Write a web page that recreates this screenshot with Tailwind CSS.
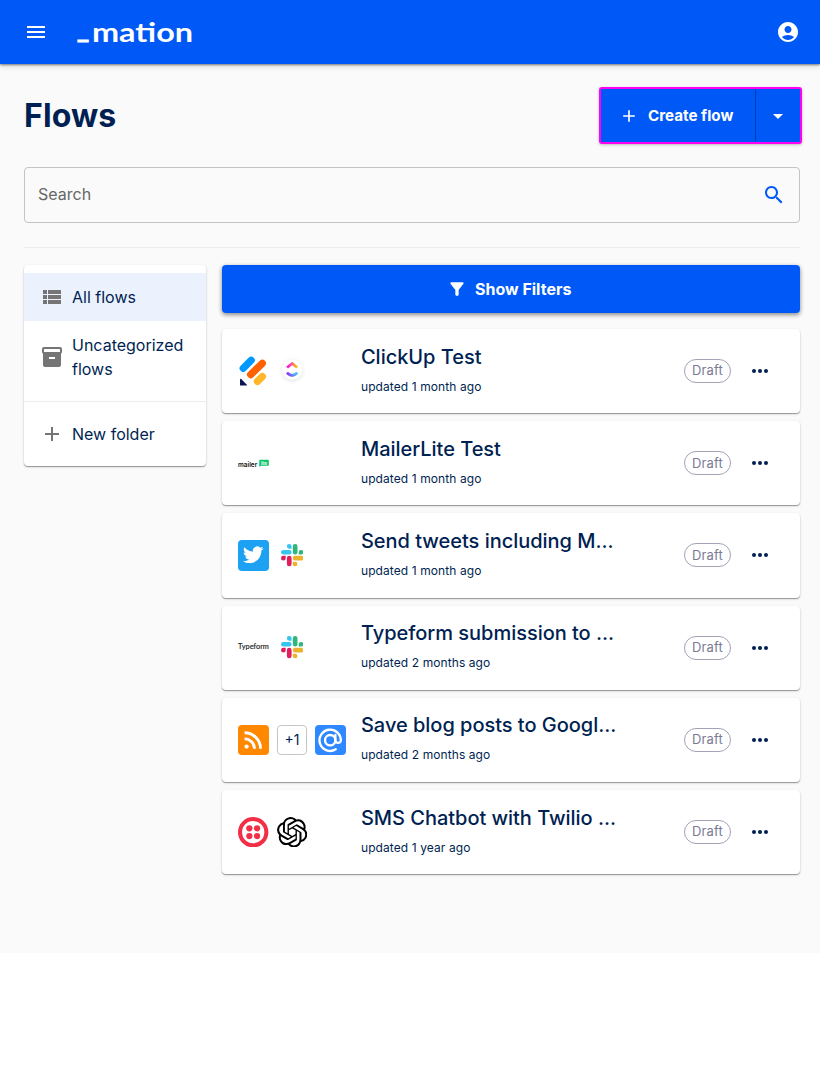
<!DOCTYPE html>
<html lang="en">
<head>
  <meta charset="UTF-8" />
  <title>Flows</title>
  <script src="https://cdn.jsdelivr.net/npm/@tailwindcss/browser@4"></script>
</head>
<body class="bg-white font-['Inter',sans-serif] text-[#001f52]">
  <!-- Shared icons -->
  <svg class="hidden">
    <symbol id="add" viewBox="0 0 24 24"><path d="M19 13h-6v6h-2v-6H5v-2h6V5h2v6h6v2z" /></symbol>
    <symbol id="more" viewBox="0 0 24 24"><circle cx="6" cy="12" r="2" /><circle cx="12" cy="12" r="2" /><circle cx="18" cy="12" r="2" /></symbol>
    <symbol id="slack" viewBox="0 0 24 24">
      <path d="M5.042 15.165a2.528 2.528 0 0 1-2.52 2.523A2.528 2.528 0 0 1 0 15.165a2.527 2.527 0 0 1 2.522-2.52h2.52v2.52zM6.313 15.165a2.527 2.527 0 0 1 2.521-2.52 2.527 2.527 0 0 1 2.521 2.52v6.313A2.528 2.528 0 0 1 8.834 24a2.528 2.528 0 0 1-2.521-2.522v-6.313z" fill="#e01e5a" />
      <g fill="#36c5f0" transform="rotate(90 12 12)"><path d="M5.042 15.165a2.528 2.528 0 0 1-2.52 2.523A2.528 2.528 0 0 1 0 15.165a2.527 2.527 0 0 1 2.522-2.52h2.52v2.52zM6.313 15.165a2.527 2.527 0 0 1 2.521-2.52 2.527 2.527 0 0 1 2.521 2.52v6.313A2.528 2.528 0 0 1 8.834 24a2.528 2.528 0 0 1-2.521-2.522v-6.313z" /></g>
      <g fill="#2eb67d" transform="rotate(180 12 12)"><path d="M5.042 15.165a2.528 2.528 0 0 1-2.52 2.523A2.528 2.528 0 0 1 0 15.165a2.527 2.527 0 0 1 2.522-2.52h2.52v2.52zM6.313 15.165a2.527 2.527 0 0 1 2.521-2.52 2.527 2.527 0 0 1 2.521 2.52v6.313A2.528 2.528 0 0 1 8.834 24a2.528 2.528 0 0 1-2.521-2.522v-6.313z" /></g>
      <g fill="#ecb22e" transform="rotate(270 12 12)"><path d="M5.042 15.165a2.528 2.528 0 0 1-2.52 2.523A2.528 2.528 0 0 1 0 15.165a2.527 2.527 0 0 1 2.522-2.52h2.52v2.52zM6.313 15.165a2.527 2.527 0 0 1 2.521-2.52 2.527 2.527 0 0 1 2.521 2.52v6.313A2.528 2.528 0 0 1 8.834 24a2.528 2.528 0 0 1-2.521-2.522v-6.313z" /></g>
    </symbol>
  </svg>

  <div class="h-[953px] bg-[#fafafa]">
    <header class="h-16 bg-[#0059f7] flex items-center px-6 shadow-[0_1px_2px_rgba(0,0,0,0.45),0_2px_6px_rgba(0,0,0,0.15)]">
      <svg class="size-6" viewBox="0 0 24 24" fill="white"><path d="M3 18h18v-2H3v2zm0-5h18v-2H3v2zm0-7v2h18V6H3z" /></svg>
      <svg class="ml-6 w-[124px] h-[52px] overflow-visible font-['Lato',sans-serif] font-bold" viewBox="72 6 124 52" fill="white">
        <text x="77" y="38.3" font-size="25" textLength="12" lengthAdjust="spacingAndGlyphs" stroke="white" stroke-width="1.2">_</text>
        <text x="92" y="41.5" font-size="26" textLength="101" lengthAdjust="spacingAndGlyphs">mation</text>
      </svg>
      <svg class="ml-auto -mr-1 size-6" viewBox="0 0 24 24" fill="white"><path d="M12 2C6.48 2 2 6.48 2 12s4.48 10 10 10 10-4.48 10-10S17.52 2 12 2zm0 4c1.93 0 3.5 1.57 3.5 3.5S13.93 13 12 13s-3.5-1.57-3.5-3.5S10.07 6 12 6zm0 14c-2.03 0-4.43-.82-6.14-2.88C7.55 15.8 9.68 15 12 15s4.45.8 6.14 2.12C16.43 19.18 14.03 20 12 20z" /></svg>
    </header>

    <main class="pl-6 pr-5 pt-[23px]">
      <div class="flex items-center justify-between h-[57px] -mr-0.5">
        <h1 class="text-[32px] font-bold tracking-[0.1px]">Flows</h1>
        <div class="flex w-[203px] h-[57px] rounded-[3px] border-2 border-[#ff00f5] bg-[#0059f7] text-white shadow-[0_1px_3px_rgba(0,0,0,0.25)]">
          <button class="w-[155px] flex items-center pl-[18px] border-r border-[#003da8] text-[15.2px] font-bold">
            <svg class="size-5 mr-[9px]" viewBox="0 0 24 24" fill="white"><use href="#add" /></svg>
            <span class="pt-px">Create flow</span>
          </button>
          <button class="flex-1 flex items-center justify-center">
            <svg class="size-6" viewBox="0 0 24 24" fill="white"><path d="m7 10 5 5 5-5z" /></svg>
          </button>
        </div>
      </div>

      <div class="mt-[23px] h-[56px] flex items-center justify-between border border-[#c4c4c4] rounded px-[13px] text-[#666]">
        <span class="pb-0.5">Search</span>
        <svg class="size-6" viewBox="0 0 24 24" fill="#0059f7"><path d="M15.5 14h-.79l-.28-.27C15.41 12.59 16 11.11 16 9.5 16 5.91 13.09 3 9.5 3S3 5.91 3 9.5 5.91 16 9.5 16c1.61 0 3.09-.59 4.23-1.57l.27.28v.79l5 4.99L20.49 19l-4.99-5zm-6 0C7.01 14 5 11.99 5 9.5S7.01 5 9.5 5 14 7.01 14 9.5 11.99 14 9.5 14z" /></svg>
      </div>

      <hr class="mt-6 border-[#ededed]" />

      <div class="mt-[17px] flex items-start gap-4">
        <!-- Folders -->
        <aside class="w-[182.4px] pt-2 h-[201px] bg-white rounded shadow-[0_1px_1px_rgba(0,0,0,0.35),0_1px_3px_rgba(0,0,0,0.12)]">
          <div class="h-12 flex items-center pl-4 pb-px bg-[#ecf1fe]">
            <svg class="size-6 mr-2" viewBox="0 0 24 24" fill="#757575"><path d="M3 14h4v-4H3v4zm0 5h4v-4H3v4zM3 9h4V5H3v4zm5 5h13v-4H8v4zm0 5h13v-4H8v4zM8 5v4h13V5H8z" /></svg>
            All flows
          </div>
          <div class="h-[72px] flex items-center pl-4">
            <svg class="size-6 mr-2 shrink-0" viewBox="0 0 24 24" fill="#757575"><path d="M20 2H4c-1 0-2 .9-2 2v3.01c0 .72.43 1.34 1 1.69V20c0 1.1 1.1 2 2 2h14c.9 0 2-.9 2-2V8.7c.57-.35 1-.97 1-1.69V4c0-1.1-1-2-2-2zm-5 12H9v-2h6v2zm5-7H4V4l16-.02V7z" /></svg>
            <span>Uncategorized flows</span>
          </div>
          <hr class="my-2 border-[#ececec]" />
          <div class="h-12 flex items-center pl-4">
            <svg class="size-6 mr-2" viewBox="0 0 24 24" fill="#757575"><use href="#add" /></svg>
            New folder
          </div>
        </aside>

        <section class="flex-1">
          <button class="w-full h-12 flex items-center justify-center gap-2 pr-1 pb-px rounded bg-[#0059f7] text-white text-[16px] font-bold shadow-[0_2px_4px_rgba(0,0,0,0.35),0_1px_5px_rgba(0,0,0,0.15)]">
            <svg class="size-5" viewBox="0 0 24 24" fill="white"><path d="M4.25 5.61C6.27 8.2 10 13 10 13v6c0 .55.45 1 1 1h2c.55 0 1-.45 1-1v-6s3.72-4.8 5.74-7.39c.51-.66.04-1.61-.79-1.61H5.04c-.83 0-1.3.95-.79 1.61z" /></svg>
            Show Filters
          </button>

          <!-- Flow rows -->
          <div class="mt-4 flex flex-col gap-2">
            <div class="h-[84.2px] flex items-center pl-4 pr-7 bg-white rounded shadow-[0_1px_1px_rgba(0,0,0,0.35),0_1px_3px_rgba(0,0,0,0.12)]">
              <div class="w-[122.6px] flex gap-2">
                <svg class="size-[30.4px]" viewBox="0 0 30 30" stroke-width="7.2" stroke-linecap="round">
                  <path d="M5.2 12.1 13 4.2" stroke="#0099ff" />
                  <path d="M12.5 18.3 24 7.2" stroke="#ff6100" />
                  <path d="M19.2 25.1 24 20.4" stroke="#ffb629" />
                  <path d="M2 23.1v6h6.5q.8-.2.2-.8L3.2 22.6q-.8-.6-1.2.5z" fill="#0a1551" />
                </svg>
                <svg class="size-[30.4px] overflow-visible" viewBox="0 0 30 30" fill="none">
                  <defs>
                    <linearGradient id="cu-top"><stop stop-color="#ff02f0" /><stop offset="1" stop-color="#ffc800" /></linearGradient>
                    <linearGradient id="cu-bottom"><stop stop-color="#8930fd" /><stop offset="1" stop-color="#49ccf9" /></linearGradient>
                  </defs>
                  <circle class="drop-shadow-[0_1px_2px_rgba(0,0,0,0.12)]" cx="15" cy="13.5" r="10" fill="white" />
                  <path d="M10 11.4 15 7.3l5 4.1" stroke="url(#cu-top)" stroke-width="2.7" />
                  <path d="M9.8 16.6q5.2 5.2 10.4 0" stroke="url(#cu-bottom)" stroke-width="2.7" />
                </svg>
              </div>
              <div class="w-[323px] pb-[5px]">
                <div class="text-[20px] leading-8 font-medium tracking-[-0.03px]">ClickUp Test</div>
                <div class="mt-1 text-xs leading-5 tracking-[0.09px]">updated 1 month ago</div>
              </div>
              <span class="w-[47px] h-6 flex items-center justify-center rounded-full border border-[#a3a3b8] text-[13px] tracking-[0.2px] text-[#7a7a94]">Draft</span>
              <svg class="ml-auto size-6" viewBox="0 0 24 24" fill="#001f52"><use href="#more" /></svg>
            </div>

            <div class="h-[84.2px] flex items-center pl-4 pr-7 bg-white rounded shadow-[0_1px_1px_rgba(0,0,0,0.35),0_1px_3px_rgba(0,0,0,0.12)]">
              <div class="w-[122.6px] flex gap-2">
                <svg class="size-[30.4px] overflow-visible font-semibold" viewBox="0 0 30 30">
                  <text x="0" y="18.5" font-size="6.4" textLength="19" lengthAdjust="spacingAndGlyphs" fill="#111">mailer</text>
                  <path d="M21.8 11.5h7.8a.8.8 0 0 1 .8.8v4.4a.8.8 0 0 1-.8.8h-7L21 18.8v-6.5a.8.8 0 0 1 .8-.8z" fill="#09c269" />
                  <text x="22.6" y="16.3" font-size="4.5" textLength="6" lengthAdjust="spacingAndGlyphs" fill="white">lite</text>
                </svg>
              </div>
              <div class="w-[323px] pb-[5px]">
                <div class="text-[20px] leading-8 font-medium tracking-[-0.03px]">MailerLite Test</div>
                <div class="mt-1 text-xs leading-5 tracking-[0.09px]">updated 1 month ago</div>
              </div>
              <span class="w-[47px] h-6 flex items-center justify-center rounded-full border border-[#a3a3b8] text-[13px] tracking-[0.2px] text-[#7a7a94]">Draft</span>
              <svg class="ml-auto size-6" viewBox="0 0 24 24" fill="#001f52"><use href="#more" /></svg>
            </div>

            <div class="h-[84.2px] flex items-center pl-4 pr-7 bg-white rounded shadow-[0_1px_1px_rgba(0,0,0,0.35),0_1px_3px_rgba(0,0,0,0.12)]">
              <div class="w-[122.6px] flex gap-2">
                <svg class="size-[30.4px] rounded bg-[#1da1f2]" viewBox="-4.2 -3.8 32 32" fill="white"><path d="M23.953 4.57a10 10 0 01-2.825.775 4.958 4.958 0 002.163-2.723c-.951.555-2.005.959-3.127 1.184a4.92 4.92 0 00-8.384 4.482C7.69 8.095 4.067 6.13 1.64 3.162a4.822 4.822 0 00-.666 2.475c0 1.71.87 3.213 2.188 4.096a4.904 4.904 0 01-2.228-.616v.06a4.923 4.923 0 003.946 4.827 4.996 4.996 0 01-2.212.085 4.936 4.936 0 004.604 3.417 9.867 9.867 0 01-6.102 2.105c-.39 0-.779-.023-1.17-.067a13.995 13.995 0 007.557 2.209c9.053 0 13.998-7.496 13.998-13.985 0-.21 0-.42-.015-.63A9.935 9.935 0 0024 4.59z" transform="translate(1 0.9) scale(0.9)" /></svg>
                <svg class="size-[30.4px] p-1"><use href="#slack" /></svg>
              </div>
              <div class="w-[323px] pb-[5px]">
                <div class="text-[20px] leading-8 font-medium tracking-[-0.03px]">Send tweets including M...</div>
                <div class="mt-1 text-xs leading-5 tracking-[0.09px]">updated 1 month ago</div>
              </div>
              <span class="w-[47px] h-6 flex items-center justify-center rounded-full border border-[#a3a3b8] text-[13px] tracking-[0.2px] text-[#7a7a94]">Draft</span>
              <svg class="ml-auto size-6" viewBox="0 0 24 24" fill="#001f52"><use href="#more" /></svg>
            </div>

            <div class="h-[84.2px] flex items-center pl-4 pr-7 bg-white rounded shadow-[0_1px_1px_rgba(0,0,0,0.35),0_1px_3px_rgba(0,0,0,0.12)]">
              <div class="w-[122.6px] flex gap-2">
                <svg class="size-[30.4px] overflow-visible font-['Lato',sans-serif]" viewBox="0 0 30 30">
                  <text x="0" y="16.5" font-size="7" textLength="30.5" lengthAdjust="spacingAndGlyphs" fill="#222" stroke="#222" stroke-width="0.15">Typeform</text>
                </svg>
                <svg class="size-[30.4px] p-1"><use href="#slack" /></svg>
              </div>
              <div class="w-[323px] pb-[5px]">
                <div class="text-[20px] leading-8 font-medium tracking-[-0.03px]">Typeform submission to ...</div>
                <div class="mt-1 text-xs leading-5 tracking-[0.09px]">updated 2 months ago</div>
              </div>
              <span class="w-[47px] h-6 flex items-center justify-center rounded-full border border-[#a3a3b8] text-[13px] tracking-[0.2px] text-[#7a7a94]">Draft</span>
              <svg class="ml-auto size-6" viewBox="0 0 24 24" fill="#001f52"><use href="#more" /></svg>
            </div>

            <div class="h-[84.2px] flex items-center pl-4 pr-7 bg-white rounded shadow-[0_1px_1px_rgba(0,0,0,0.35),0_1px_3px_rgba(0,0,0,0.12)]">
              <div class="w-[122.6px] flex gap-2">
                <svg class="size-[30.4px] rounded bg-[#ff8800]" viewBox="0 0 30 30" fill="none" stroke="white" stroke-width="2.9">
                  <circle cx="8.5" cy="21.3" r="2.1" fill="white" stroke="none" />
                  <path d="M6.5 13.7a9.8 9.8 0 0 1 9.8 9.8M6.5 7.7a15.8 15.8 0 0 1 15.8 15.8" />
                </svg>
                <span class="size-[30.4px] flex items-center justify-center rounded border border-[#c4c4c4] text-sm">+1</span>
                <svg class="size-[30.4px] rounded bg-[#2f88ff]" viewBox="0 0 30 30" fill="none" stroke="white" stroke-width="2.3" stroke-linecap="round">
                  <circle cx="15" cy="15" r="5.1" />
                  <path d="M20.1 9.8V16a2.9 2.9 0 0 0 5.3 0A10.5 10.5 0 1 0 20.5 24" />
                </svg>
              </div>
              <div class="w-[323px] pb-[5px]">
                <div class="text-[20px] leading-8 font-medium tracking-[-0.03px]">Save blog posts to Googl...</div>
                <div class="mt-1 text-xs leading-5 tracking-[0.09px]">updated 2 months ago</div>
              </div>
              <span class="w-[47px] h-6 flex items-center justify-center rounded-full border border-[#a3a3b8] text-[13px] tracking-[0.2px] text-[#7a7a94]">Draft</span>
              <svg class="ml-auto size-6" viewBox="0 0 24 24" fill="#001f52"><use href="#more" /></svg>
            </div>

            <div class="h-[84.2px] flex items-center pl-4 pr-7 bg-white rounded shadow-[0_1px_1px_rgba(0,0,0,0.35),0_1px_3px_rgba(0,0,0,0.12)]">
              <div class="w-[122.6px] flex gap-2">
                <svg class="size-[30.4px]" viewBox="0 0 30 30" fill="#f22f46">
                  <circle cx="15" cy="15" r="13" fill="none" stroke="#f22f46" stroke-width="4" />
                  <circle cx="11.2" cy="11.2" r="3.1" /><circle cx="18.8" cy="11.2" r="3.1" />
                  <circle cx="11.2" cy="18.8" r="3.1" /><circle cx="18.8" cy="18.8" r="3.1" />
                </svg>
                <svg class="size-[30.4px]" viewBox="0 0 24 24" fill="black"><path d="M22.2819 9.8211a5.9847 5.9847 0 0 0-.5157-4.9108 6.0462 6.0462 0 0 0-6.5098-2.9A6.0651 6.0651 0 0 0 4.9807 4.1818a5.9847 5.9847 0 0 0-3.9977 2.9 6.0462 6.0462 0 0 0 .7427 7.0966 5.98 5.98 0 0 0 .511 4.9107 6.051 6.051 0 0 0 6.5146 2.9001A5.9847 5.9847 0 0 0 13.2599 24a6.0557 6.0557 0 0 0 5.7718-4.2058 5.9894 5.9894 0 0 0 3.9977-2.9001 6.0557 6.0557 0 0 0-.7475-7.0729zm-9.022 12.6081a4.4755 4.4755 0 0 1-2.8764-1.0408l.1419-.0804 4.7783-2.7582a.7948.7948 0 0 0 .3927-.6813v-6.7369l2.02 1.1686a.071.071 0 0 1 .038.052v5.5826a4.504 4.504 0 0 1-4.4945 4.4944zm-9.6607-4.1254a4.4708 4.4708 0 0 1-.5346-3.0137l.142.0852 4.783 2.7582a.7712.7712 0 0 0 .7806 0l5.8428-3.3685v2.3324a.0804.0804 0 0 1-.0332.0615L9.74 19.9502a4.4992 4.4992 0 0 1-6.1408-1.6464zM2.3408 7.8956a4.485 4.485 0 0 1 2.3655-1.9728V11.6a.7664.7664 0 0 0 .3879.6765l5.8144 3.3543-2.0201 1.1685a.0757.0757 0 0 1-.071 0l-4.8303-2.7865A4.504 4.504 0 0 1 2.3408 7.872zm16.5963 3.8558L13.1038 8.364 15.1192 7.2a.0757.0757 0 0 1 .071 0l4.8303 2.7913a4.4944 4.4944 0 0 1-.6765 8.1042v-5.6772a.79.79 0 0 0-.407-.667zm2.0107-3.0231l-.142-.0852-4.7735-2.7818a.7759.7759 0 0 0-.7854 0L9.409 9.2297V6.8974a.0662.0662 0 0 1 .0284-.0615l4.8303-2.7866a4.4992 4.4992 0 0 1 6.6802 4.66zM8.3065 12.863l-2.02-1.1638a.0804.0804 0 0 1-.038-.0567V6.0742a4.4992 4.4992 0 0 1 7.3757-3.4537l-.142.0805L8.704 5.459a.7948.7948 0 0 0-.3927.6813zm1.0976-2.3654l2.602-1.4998 2.6069 1.4998v2.9994l-2.5974 1.4997-2.6067-1.4997Z" /></svg>
              </div>
              <div class="w-[323px] pb-[5px]">
                <div class="text-[20px] leading-8 font-medium tracking-[-0.03px]">SMS Chatbot with Twilio ...</div>
                <div class="mt-1 text-xs leading-5 tracking-[0.09px]">updated 1 year ago</div>
              </div>
              <span class="w-[47px] h-6 flex items-center justify-center rounded-full border border-[#a3a3b8] text-[13px] tracking-[0.2px] text-[#7a7a94]">Draft</span>
              <svg class="ml-auto size-6" viewBox="0 0 24 24" fill="#001f52"><use href="#more" /></svg>
            </div>
          </div>
        </section>
      </div>
    </main>
  </div>
</body>
</html>
